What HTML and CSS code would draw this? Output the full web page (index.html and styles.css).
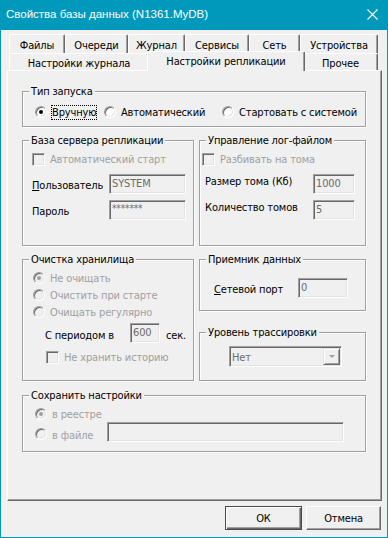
FILE: index.html
```html
<!DOCTYPE html>
<html lang="ru">
<head>
<meta charset="utf-8">
<title>Свойства базы данных</title>
<link rel="stylesheet" href="styles.css">
</head>
<body>
<div class="window">
  <div class="titlebar">
    <span class="title">Свойства базы данных (N1361.MyDB)</span>
    <svg class="close" width="11" height="11" viewBox="0 0 11 11"><path d="M0.5 0.5 L10.5 10.5 M10.5 0.5 L0.5 10.5" stroke="#fff" stroke-width="1.1" fill="none"/></svg>
  </div>
  <div class="client">
    <div class="tabs">
      <div class="tabrow row1">
        <div class="tab w56">Файлы</div>
        <div class="tab w63">Очереди</div>
        <div class="tab w57">Журнал</div>
        <div class="tab w64">Сервисы</div>
        <div class="tab w51">Сеть</div>
        <div class="tab w78">Устройства</div>
      </div>
      <div class="tabrow row2">
        <div class="tab w140">Настройки журнала</div>
        <div class="tab sel w158">Настройки репликации</div>
        <div class="tab w75">Прочее</div>
      </div>
    </div>
    <div class="panel">
      <div class="group g1">
        <div class="legend">Тип запуска</div>
        <div class="gbody b1">
          <div class="radios">
            <div class="opt r1"><span class="radio on"></span><span class="lbl focus">Вручную</span></div>
            <div class="opt r2"><span class="radio"></span><span class="lbl">Автоматический</span></div>
            <div class="opt"><span class="radio"></span><span class="lbl">Стартовать с системой</span></div>
          </div>
        </div>
      </div>
      <div class="cols">
        <div class="col col-l">
          <div class="group g2">
            <div class="legend">База сервера репликации</div>
            <div class="gbody b2">
              <div class="opt"><span class="chk"></span><span class="lbl dis">Автоматический старт</span></div>
              <div class="frow fr1">
                <span class="flabel fl-user"><u>П</u>ользователь</span>
                <span class="edit e-user">SYSTEM</span>
              </div>
              <div class="frow fr2">
                <span class="flabel fl-user">Пароль</span>
                <span class="edit e-user pw">*******</span>
              </div>
            </div>
          </div>
          <div class="group g4">
            <div class="legend">Очистка хранилища</div>
            <div class="gbody b4">
              <div class="opt"><span class="radio dis on"></span><span class="lbl dis">Не очищать</span></div>
              <div class="opt mt4"><span class="radio dis"></span><span class="lbl dis">Очистить при старте</span></div>
              <div class="opt mt4"><span class="radio dis"></span><span class="lbl dis">Очищать регулярно</span></div>
              <div class="frow period">
                <span class="flabel fl-period">С периодом в</span>
                <span class="edit e-period">600</span>
                <span class="flabel sec">сек.</span>
              </div>
              <div class="opt hist"><span class="chk"></span><span class="lbl dis">Не хранить историю</span></div>
            </div>
          </div>
        </div>
        <div class="col col-r">
          <div class="group g3">
            <div class="legend">Управление лог-файлом</div>
            <div class="gbody b3">
              <div class="opt"><span class="chk"></span><span class="lbl dis">Разбивать на тома</span></div>
              <div class="frow fr1">
                <span class="flabel fl-log">Размер тома (Кб)</span>
                <span class="edit e-log">1000</span>
              </div>
              <div class="frow fr2">
                <span class="flabel fl-log">Количество томов</span>
                <span class="edit e-log">5</span>
              </div>
            </div>
          </div>
          <div class="group g5">
            <div class="legend">Приемник данных</div>
            <div class="gbody b5">
              <div class="frow">
                <span class="flabel fl-port"><u>С</u>етевой порт</span>
                <span class="edit e-port">0</span>
              </div>
            </div>
          </div>
          <div class="group g6">
            <div class="legend">Уровень трассировки</div>
            <div class="gbody b6">
              <div class="combo">
                <span class="combo-text">Нет</span>
                <span class="dd"><span class="arrow"></span></span>
              </div>
            </div>
          </div>
        </div>
      </div>
      <div class="group g7">
        <div class="legend">Сохранить настройки</div>
        <div class="gbody b7">
          <div class="opt"><span class="radio dis on"></span><span class="lbl dis">в реестре</span></div>
          <div class="frow file">
            <span class="radio dis"></span>
            <span class="flabel dis fl-file">в файле</span>
            <span class="edit e-file"></span>
          </div>
        </div>
      </div>
    </div>
    <div class="buttons">
      <div class="btn default w77">ОК</div>
      <div class="btn w75">Отмена</div>
    </div>
  </div>
</div>
</body>
</html>
```

FILE: styles.css
```css
* { box-sizing: border-box; }

body {
  margin: 0;
  background: #ffffff;
  font-family: "DejaVu Sans Condensed", "Liberation Sans", Arial, sans-serif;
  font-size: 11px;
  line-height: 13px;
  letter-spacing: -0.15px;
  color: #000;
}

.window {
  width: 388px;
  height: 538px;
  border: 1px solid #0099bc;
  border-top: 0;
  background: #f0f0f0;
  display: flex;
  flex-direction: column;
}

.titlebar {
  height: 30px;
  flex: none;
  background: #0099bc;
  color: #fff;
  display: flex;
  align-items: flex-start;
  justify-content: space-between;
  padding: 0 9px 0 5px;
}

.title {
  font-family: "Liberation Sans", Arial, sans-serif;
  font-size: 11.5px;
  letter-spacing: 0;
  line-height: 16px;
  margin-top: 6px;
  white-space: nowrap;
}

.close { margin-top: 9px; flex: none; }

.client {
  flex: 1;
  padding: 4px 5px 0 6px;
  display: flex;
  flex-direction: column;
}

/* tabs */
.tabs { margin-left: 2px; width: 369px; }
.tabrow { display: flex; }
.row1 { height: 19px; }
.row2 { height: 17px; align-items: flex-end; }

.tab {
  flex: none;
  background: #f0f0f0;
  border: 1px solid;
  border-bottom: 0;
  border-color: #fff #696969 #f0f0f0 #fff;
  border-radius: 2px 2px 0 0;
  box-shadow: inset -1px 0 0 #a0a0a0;
  text-align: center;
  white-space: nowrap;
}
.row1 .tab { height: 19px; padding-top: 4px; }
.row2 .tab { height: 17px; padding-top: 3px; }
.row2 .tab.sel {
  height: 20px;
  margin: 0 -2px -1px;
  padding-top: 3px;
  position: relative;
  z-index: 1;
}

.w56 { width: 56px; }
.w63 { width: 63px; }
.w57 { width: 57px; }
.w64 { width: 64px; }
.w51 { width: 51px; }
.w78 { width: 78px; }
.w140 { width: 140px; }
.w158 { width: 158px; }
.w75 { width: 75px; }
.w77 { width: 77px; }

/* panel */
.panel {
  height: 431px;
  flex: none;
  border: 1px solid;
  border-color: #fff #696969 #696969 #fff;
  box-shadow: inset -1px -1px 0 #a0a0a0;
  padding: 20px 15px 0 14px;
}

.group {
  border: 1px solid #a0a0a0;
  box-shadow: inset 1px 1px 0 #fff, 1px 1px 0 #fff;
}
.legend {
  width: max-content;
  height: 13px;
  margin: -7px 0 -6px 6px;
  padding: 0 2px;
  background: #f0f0f0;
  white-space: nowrap;
}

.g1 { height: 36px; }
.b1 { padding: 14px 0 0 12px; }
.radios { display: flex; height: 13px; }
.r1 { width: 69px; }
.r2 { width: 118px; }

.cols { display: flex; gap: 5px; margin-top: 13px; }
.col { display: flex; flex-direction: column; }
.col-l { width: 172px; }
.col-r { width: 167px; }

.g2, .g3 { height: 106px; }
.g4 { height: 122px; margin-top: 13px; }
.g5 { height: 52px; margin-top: 13px; }
.g6 { height: 49px; margin-top: 21px; }
.g7 { height: 57px; margin-top: 14px; }

.b2 { padding: 12px 0 0 9px; }
.b3 { padding: 12px 0 0 2px; }
.b4 { padding: 12px 0 0 10px; }
.b5 { padding: 18px 0 0 14px; }
.b6 { padding: 13px 0 0 29px; }
.b7 { padding: 12px 0 0 12px; }

/* options */
.opt { display: flex; align-items: flex-start; height: 13px; }
.mt4 { margin-top: 4px; }
.lbl { margin-left: 5px; white-space: nowrap; }
.lbl.focus {
  border: 1px dotted #000;
  margin: -1px 0 -1px 4px;
  padding: 0;
}
.dis { color: #a0a0a0; }

.radio {
  flex: none;
  width: 12px;
  height: 12px;
  border-radius: 50%;
  border: 1px solid;
  border-color: #a0a0a0 #fff #fff #a0a0a0;
  box-shadow: inset 1px 1px 0 #696969, inset -1px -1px 0 #e3e3e3;
  background: #fff;
  display: flex;
  align-items: center;
  justify-content: center;
}
.radio.on::after {
  content: "";
  width: 4px;
  height: 4px;
  border-radius: 50%;
  background: #000;
}
.radio.dis { background: #f0f0f0; }
.radio.dis.on::after { background: #a0a0a0; }

.chk {
  flex: none;
  width: 13px;
  height: 13px;
  border: 1px solid;
  border-color: #a0a0a0 #fff #fff #a0a0a0;
  box-shadow: inset 1px 1px 0 #696969, inset -1px -1px 0 #e3e3e3;
  background: #f0f0f0;
}

/* field rows */
.frow { display: flex; align-items: flex-start; height: 20px; }
.fr1 { margin-top: 8px; }
.fr2 { margin-top: 6px; }
.flabel { flex: none; white-space: nowrap; }
.fl-user { width: 77px; margin-top: 5px; }
.fl-log { width: 108px; margin-top: 1px; margin-left: 3px; }
.fl-port { width: 84px; margin-top: 5px; }
.fl-period { width: 85px; margin-top: 6px; }
.sec { margin: 6px 0 0 6px; }
.period { margin-top: 4px; padding-left: 12px; }
.hist { margin-top: 8px; padding-left: 13px; }
.file { margin-top: 1px; }
.file .radio { margin-top: 6px; }
.fl-file { width: 55px; margin: 7px 0 0 5px; }

.edit {
  flex: none;
  height: 20px;
  border: 1px solid;
  border-color: #a0a0a0 #fff #fff #a0a0a0;
  box-shadow: inset 1px 1px 0 #696969, inset -1px -1px 0 #e3e3e3;
  background: #f0f0f0;
  color: #6d6d6d;
  padding: 2px 0 0 2px;
  white-space: nowrap;
  overflow: hidden;
}
.e-user { width: 77px; }
.e-user.pw { font-size: 10px; padding-top: 1px; }
.e-log { width: 42px; }
.e-port { width: 50px; }
.e-period { width: 30px; }
.e-file { width: 237px; }

.combo {
  width: 113px;
  height: 21px;
  border: 1px solid;
  border-color: #a0a0a0 #fff #fff #a0a0a0;
  box-shadow: inset 1px 1px 0 #696969, inset -1px -1px 0 #e3e3e3;
  background: #f0f0f0;
  display: flex;
  align-items: flex-start;
  justify-content: space-between;
}
.combo-text { color: #6d6d6d; margin: 4px 0 0 2px; }
.dd {
  width: 17px;
  height: 17px;
  margin: 1px 1px 0 0;
  border: 1px solid;
  border-color: #e3e3e3 #696969 #696969 #e3e3e3;
  box-shadow: inset 1px 1px 0 #fff, inset -1px -1px 0 #a0a0a0;
  display: flex;
  align-items: center;
  justify-content: center;
}
.arrow {
  width: 0;
  height: 0;
  border-left: 3px solid transparent;
  border-right: 3px solid transparent;
  border-top: 3px solid #a0a0a0;
}

/* buttons */
.buttons {
  display: flex;
  justify-content: flex-end;
  gap: 4px;
  margin-top: 5px;
  padding-right: 1px;
}
.btn {
  height: 24px;
  border: 1px solid;
  border-color: #fff #696969 #696969 #fff;
  box-shadow: inset -1px -1px 0 #a0a0a0;
  display: flex;
  align-items: center;
  justify-content: center;
}
.btn.default {
  border-color: #4a4a4a;
  box-shadow: inset 1px 1px 0 #fff, inset -1px -1px 0 #696969, inset -2px -2px 0 #a0a0a0;
}
```
